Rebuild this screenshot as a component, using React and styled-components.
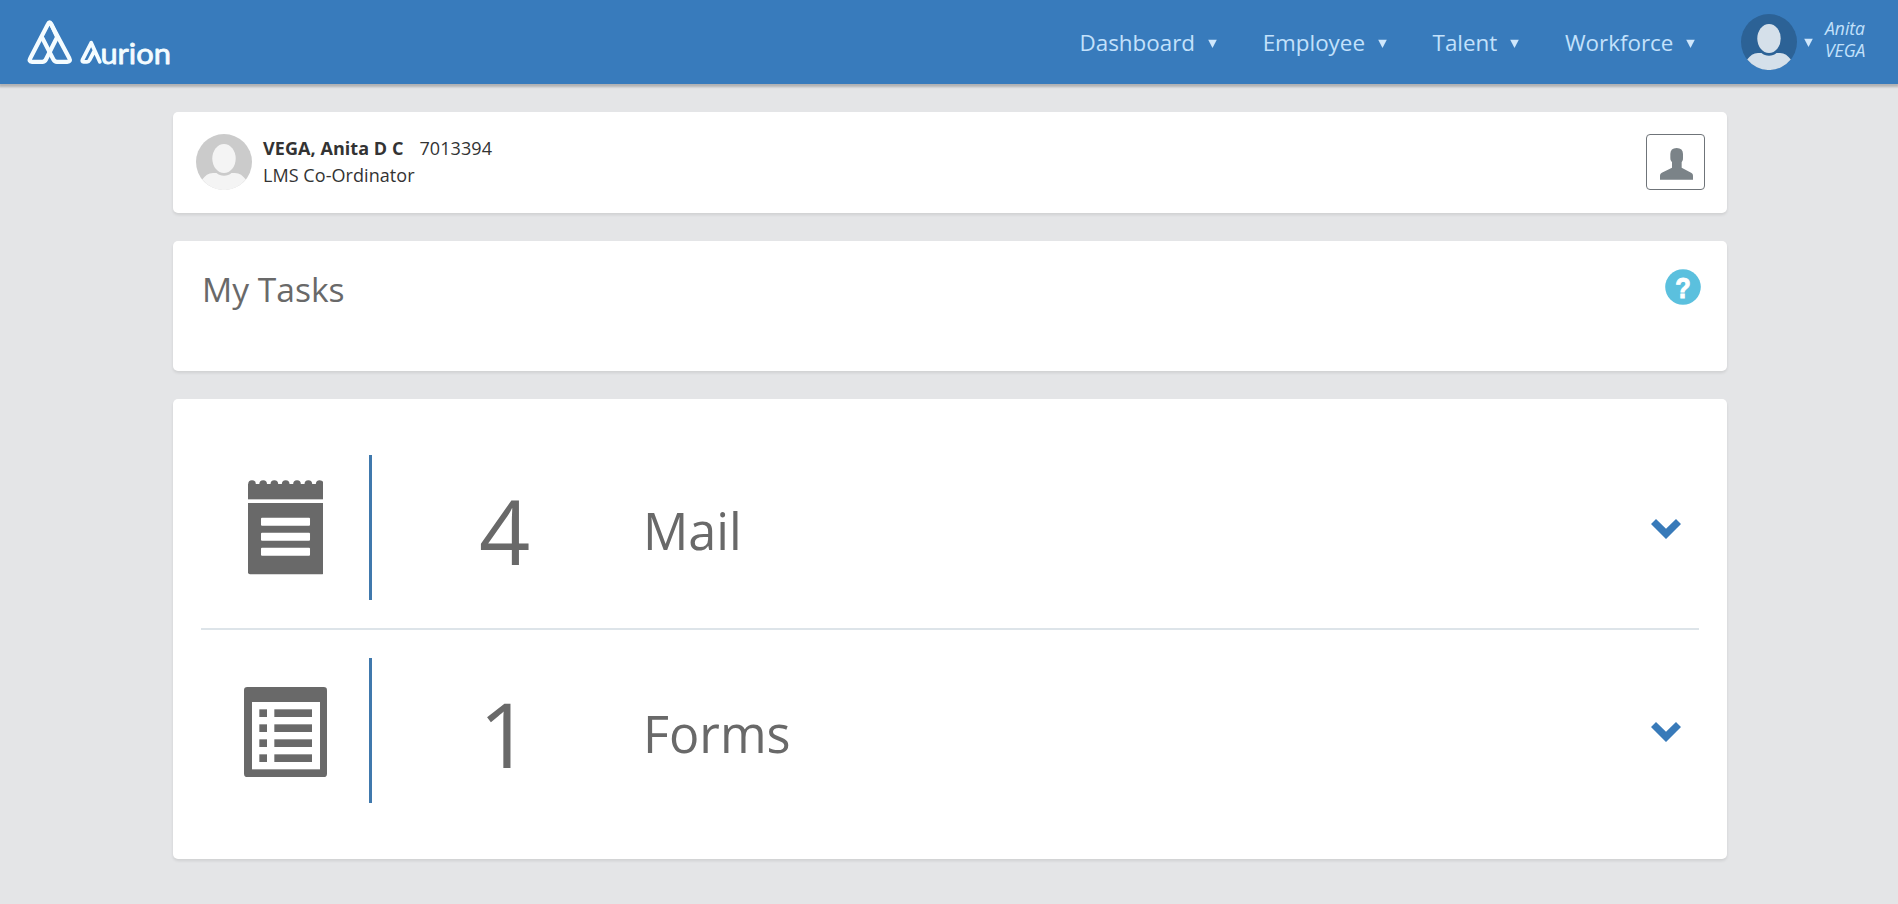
import React from "react";
import styled, { createGlobalStyle } from "styled-components";

const GlobalStyle = createGlobalStyle`
  *, *::before, *::after { box-sizing: border-box; }
  body {
    margin: 0;
    min-height: 100vh;
    background: #e4e5e7;
    color: #333;
    font-family: "Open Sans", "Noto Sans", sans-serif;
    font-size: 18px;
  }
  svg { display: block; flex: none; }
`;

const TopBar = styled.header`
  display: flex;
  align-items: center;
  justify-content: space-between;
  height: 84px;
  padding: 0 31px 0 27px;
  background: #387bbc;
  box-shadow: 0 2px 2px 1px rgba(0, 0, 0, 0.22);
  color: #c3e1fb;
`;

const Nav = styled.nav`
  display: flex;
  align-items: center;
  gap: 46px;
`;

const NavItem = styled.a`
  display: flex;
  align-items: center;
  gap: 12.6px;
  padding-top: 2px;
  font-size: 22.4px;
  line-height: 30px;
`;

const Account = styled.div`
  display: flex;
  align-items: center;
  height: 84px;
`;

const AccountName = styled.div`
  width: 42px;
  margin: -6px 0 0 12px;
  font-size: 17.5px;
  font-style: italic;
  line-height: 22px;
`;

const CaretSlot = styled.span`
  margin-left: 7px;
`;

const Page = styled.main`
  display: flex;
  flex-direction: column;
  gap: 28px;
  width: 1554px;
  margin: 28px auto 0 173px;
`;

const Card = styled.section`
  background: #fff;
  border-radius: 5px;
  box-shadow: 0 2px 3px rgba(0, 0, 0, 0.09);
`;

const ProfileCard = styled(Card)`
  display: flex;
  align-items: flex-start;
  height: 101px;
  padding: 22px 22px 0 23px;
`;

const ProfileText = styled.div`
  flex: 1;
  padding: 1px 0 0 11px;
  font-size: 18px;
  letter-spacing: 0.06px;
  line-height: 27px;
`;

const EmployeeNumber = styled.span`
  margin-left: 16px;
`;

const ProfileButton = styled.button`
  display: flex;
  align-items: center;
  justify-content: center;
  width: 59px;
  height: 56px;
  padding: 4px 0 0 2px;
  border: 1px solid #6f7479;
  border-radius: 4px;
  background: #fff;
`;

const TitleCard = styled(Card)`
  display: flex;
  align-items: flex-start;
  justify-content: space-between;
  height: 130px;
  padding: 28px 26px 0 28px;
`;

const Title = styled.h1`
  margin: 0;
  padding: 1px 0 0 1px;
  color: #696969;
  font-size: 33.6px;
  font-weight: 400;
  line-height: 38px;
`;

const TaskCard = styled(Card)`
  height: 460px;
  padding: 28px;
`;

const TaskRow = styled.div`
  display: flex;
  align-items: stretch;
  padding: 28px 0;
  color: #696969;

  & + & {
    border-top: 2px solid #dde4e9;
  }
`;

const IconCell = styled.div`
  display: flex;
  align-items: flex-start;
  justify-content: center;
  width: 171px;
  height: 145px;
  padding: ${({ $top }) => $top}px 0 0 1px;
  border-right: 3px solid #4079ad;
`;

const Count = styled.div`
  width: 265px;
  padding-top: 3px;
  font-size: 89.6px;
  line-height: 145px;
  height: 145px;
  text-align: center;
`;

const TaskName = styled.div`
  flex: 1;
  padding: 3px 0 0 6px;
  font-size: 50.4px;
  line-height: 145px;
  height: 145px;
`;

const ChevronCell = styled.div`
  display: flex;
  align-items: center;
  padding: 3px 18px 0 0;
`;

function Caret() {
  return (
    <svg width="9" height="9" viewBox="0 0 9 9">
      <path d="M0.2 0.8H8.8L4.5 9Z" fill="#cfe7fc" />
    </svg>
  );
}

function Logo() {
  return (
    <svg width="150" height="84" viewBox="27.6 0 150 84" fill="none" stroke="#f4fcff" strokeLinejoin="round" strokeLinecap="round">
      <g strokeWidth="4.2">
        <path d="M57.8 37L51.8 24.2Q50.2 20.6 48.5 24.2L31 58Q29 61.8 32.5 61.8H43Q45.4 61.8 46.5 59.5Z" />
        <path d="M42.4 37L54 59.5Q55.2 61.8 57.5 61.8H67.8Q71.8 61.8 69.8 58L51.8 24.2" />
      </g>
      <g strokeWidth="3.8">
        <path d="M100.4 61.8L91.8 42.8L83.2 59.6Q82.2 61.8 84.2 61.8H87.7Q89.3 61.8 90 60.3L94.9 51" />
      </g>
      <text x="101" y="63.5" fontFamily="Lato, sans-serif" fontSize="28.5" fill="#f4fcff" stroke="#f4fcff" strokeWidth="0.8" textLength="70.5" lengthAdjust="spacingAndGlyphs">
        urion
      </text>
    </svg>
  );
}

function Avatar({ back, front }) {
  return (
    <svg width="56" height="56" viewBox="0 0 56 56">
      <circle cx="28" cy="28" r="28" fill={back} />
      <ellipse cx="28" cy="24.5" rx="11.7" ry="14.6" fill={front} />
      <path
        d="M6.2 45.6C9 41.5 12.5 39.3 17 39H20.5C22.5 41 25 41.7 28 41.7S33.5 41 35.5 39H39C43.5 39.3 47 41.5 49.8 45.6A28 28 0 0 1 6.2 45.6Z"
        fill={front}
      />
    </svg>
  );
}

function PersonIcon() {
  return (
    <svg width="33" height="32" viewBox="180 144 99 96">
      <path d="M180 239V227Q180 220 190 216L216 203V187Q210 182 211 174V162Q211 144 230 144T249 162V174Q250 182 245 187V203L269 216Q279 220 279 227V239Z" fill="#7b8388" />
    </svg>
  );
}

function HelpIcon() {
  return (
    <svg width="36" height="36" viewBox="0 0 36 36">
      <circle cx="18" cy="18" r="17.8" fill="#5bc0de" />
      <text x="18" y="28.5" textAnchor="middle" fontFamily="Liberation Sans, sans-serif" fontWeight="700" fontSize="29" textLength="15.5" lengthAdjust="spacingAndGlyphs" fill="#fff" stroke="#fff" strokeWidth="1">
        ?
      </text>
    </svg>
  );
}

function MailIcon() {
  return (
    <svg width="75.7" height="94.7" viewBox="54 119 227 284" fill="#696969">
      {[66, 99.5, 133, 167, 201, 235, 269].map((x) => (
        <circle key={x} cx={x} cy="131" r="11.5" />
      ))}
      <rect x="54" y="131" width="227" height="46" />
      <path d="M54 188H281V396Q281 402 275 402H60Q54 402 54 396Z" />
      {[232, 277, 322].map((y) => (
        <rect key={y} x="93" y={y} width="147" height="24" rx="3" fill="#fff" />
      ))}
    </svg>
  );
}

function FormsIcon() {
  return (
    <svg width="83" height="90" viewBox="42 141 249 270" fill="#696969">
      <rect x="42" y="141" width="249" height="270" rx="10" />
      <rect x="66" y="186" width="204" height="202" fill="#fff" />
      {[208, 253, 298, 343].map((y) => (
        <g key={y}>
          <rect x="88" y={y} width="23" height="23" />
          <rect x="133" y={y} width="113" height="23" />
        </g>
      ))}
    </svg>
  );
}

function Chevron() {
  return (
    <svg width="30" height="20" viewBox="153 117 90 60">
      <path d="M153 132L168 117L198 146L228 117L243 132L198 177Z" fill="#387ab9" />
    </svg>
  );
}

const menus = ["Dashboard", "Employee", "Talent", "Workforce"];
const tasks = [
  { name: "Mail", count: 4, Icon: MailIcon, iconTop: 25 },
  { name: "Forms", count: 1, Icon: FormsIcon, iconTop: 29 },
];

export default function App() {
  return (
    <>
      <GlobalStyle />
      <TopBar>
        <Logo />
        <Nav>
          {menus.map((label) => (
            <NavItem key={label}>
              {label}
              <Caret />
            </NavItem>
          ))}
          <Account>
            <Avatar back="#2c6296" front="#d5e0ea" />
            <CaretSlot>
              <Caret />
            </CaretSlot>
            <AccountName>
              Anita
              <br />
              VEGA
            </AccountName>
          </Account>
        </Nav>
      </TopBar>
      <Page>
        <ProfileCard>
          <Avatar back="#cbcbcb" front="#f4f4f4" />
          <ProfileText>
            <div>
              <b>VEGA, Anita D C</b>
              <EmployeeNumber>7013394</EmployeeNumber>
            </div>
            <div>LMS Co-Ordinator</div>
          </ProfileText>
          <ProfileButton aria-label="Employee profile">
            <PersonIcon />
          </ProfileButton>
        </ProfileCard>
        <TitleCard>
          <Title>My Tasks</Title>
          <HelpIcon />
        </TitleCard>
        <TaskCard>
          {tasks.map(({ name, count, Icon, iconTop }) => (
            <TaskRow key={name}>
              <IconCell $top={iconTop}>
                <Icon />
              </IconCell>
              <Count>{count}</Count>
              <TaskName>{name}</TaskName>
              <ChevronCell>
                <Chevron />
              </ChevronCell>
            </TaskRow>
          ))}
        </TaskCard>
      </Page>
    </>
  );
}
